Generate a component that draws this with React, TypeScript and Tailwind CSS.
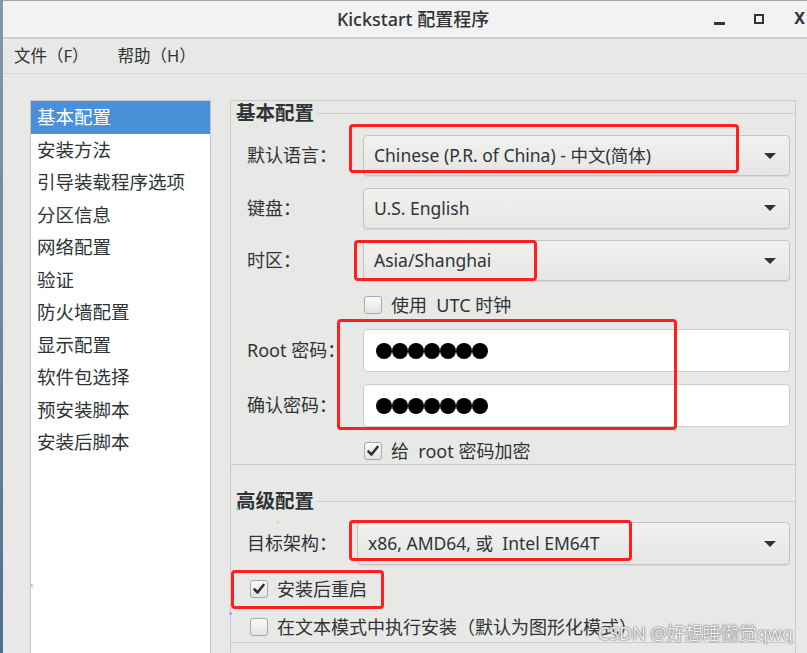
import React from "react";

const FONT = '"Noto Sans", "Noto Sans CJK SC", sans-serif';

function Arrow() {
  return (
    <div className="w-0 h-0 border-l-[6px] border-r-[6px] border-t-[6px] border-l-transparent border-r-transparent border-t-[#2e3436]" />
  );
}

function Combo({ text, className }: { text: string; className?: string }) {
  return (
    <div
      className={
        "flex items-center justify-between pl-[10px] pr-[13px] rounded-[4px] border border-[#c4c4c4] bg-gradient-to-b from-[#f1f1f0] to-[#e6e6e5] shadow-[0_1px_0_#d8d8d8] text-[17.5px] text-[#2e3436] " +
        (className || "")
      }
    >
      <span>{text}</span>
      <Arrow />
    </div>
  );
}

function PwInput() {
  return (
    <div className="h-[43px] flex items-center pl-[12px] rounded-[4px] border border-[#cdcdcd] bg-white">
      {[0, 1, 2, 3, 4, 5, 6].map((i) => (
        <div key={i} className="w-[16px] h-[16px] rounded-full bg-black" />
      ))}
    </div>
  );
}

function Check({ checked }: { checked?: boolean }) {
  return (
    <div className="w-[18px] h-[18px] shrink-0 rounded-[3px] border border-[#a9a9a9] bg-gradient-to-b from-[#fafafa] to-[#e4e4e4] flex items-center justify-center">
      {checked && (
        <svg width="14" height="14" viewBox="0 0 14 14">
          <path d="M2.5 7.5 L5.5 10.5 L11.5 3" fill="none" stroke="#2e3436" strokeWidth="2.6" strokeLinecap="round" strokeLinejoin="round" />
        </svg>
      )}
    </div>
  );
}

function Legend({ text }: { text: string }) {
  return (
    <div className="flex items-center h-[20px] pl-[5px]">
      <span className="text-[19.5px] font-bold text-[#2e3436] leading-none">{text}</span>
      <div className="flex-1 h-px bg-[#cdcdcd] ml-[3px] mt-[1px]" />
    </div>
  );
}

function RedBox({ l, t, w, h }: { l: number; t: number; w: number; h: number }) {
  return (
    <div
      className="absolute border-[3px] border-[#ff1f1f] rounded-[4px]"
      style={{ left: l, top: t, width: w, height: h }}
    />
  );
}

const items = [
  "基本配置",
  "安装方法",
  "引导装载程序选项",
  "分区信息",
  "网络配置",
  "验证",
  "防火墙配置",
  "显示配置",
  "软件包选择",
  "预安装脚本",
  "安装后脚本",
];

export default function App() {
  return (
    <div
      className="relative w-[807px] h-[653px] overflow-hidden flex bg-[#e8e8e7] text-[#2e3436]"
      style={{ fontFamily: FONT }}
    >
      <div className="w-[3px] bg-gradient-to-b from-[#8596a8] via-[#6f87a0] to-[#4d6f93]" />
      <div className="flex-1 flex flex-col">
        {/* title bar */}
        <div className="h-[37px] shrink-0 flex items-center bg-[#f2f2f2] border-t border-[#a3a3a3]">
          <div className="flex-1" />
          <div className="ml-[16px] text-[18px] font-medium text-[#2e3436]">Kickstart 配置程序</div>
          <div className="flex-1 flex items-center justify-end">
            <div className="w-[11px] h-[3px] bg-[#333] mt-[8px] mr-[29px]" />
            <div className="w-[10px] h-[10px] border-[2px] border-[#333] mr-[30px]" />
            <div className="text-[16px] font-bold text-[#333] leading-none mr-[2px] mb-[2px]">X</div>
          </div>
        </div>
        {/* menu bar */}
        <div className="h-[37px] shrink-0 flex items-center bg-[#e8e8e7] border-t-2 border-[#cfcfce] border-b border-b-[#d6d6d5] pl-[11px] text-[16.5px] text-[#2e3436]">
          <span>文件（F）</span>
          <span className="ml-[29px]">帮助（H）</span>
        </div>
        {/* content */}
        <div className="flex-1 flex pt-[26px] pl-[27px] pr-[11px]">
          <div className="w-[181px] shrink-0 bg-white border border-[#c3c3c3] border-b-0">
            {items.map((t, i) => (
              <div
                key={t}
                className={
                  "h-[32.5px] flex items-center pl-[6px] text-[18.5px] " +
                  (i === 0 ? "bg-[#4a90d9] text-white" : "text-[#2e3436]")
                }
              >
                {t}
              </div>
            ))}
          </div>
          <div className="ml-[19px] flex-1 border-l border-r border-t border-[#cbcbcb] flex flex-col">
            {/* frame 1 */}
            <div className="mt-[2px]">
              <Legend text="基本配置" />
            </div>
            <div className="border-b border-[#cdcdcd] pl-[16px] pr-[5px] pt-[12px] pb-[4px] flex flex-col text-[18px]">
              <div className="flex items-center h-[41px]">
                <div className="w-[116px]">默认语言：</div>
                <Combo text="Chinese (P.R. of China) - 中文(简体)" className="flex-1 h-[41px]" />
              </div>
              <div className="flex items-center h-[41px] mt-[11.5px]">
                <div className="w-[116px]">键盘：</div>
                <Combo text="U.S. English" className="flex-1 h-[41px]" />
              </div>
              <div className="flex items-center h-[41px] mt-[11.5px]">
                <div className="w-[116px]">时区：</div>
                <Combo text="Asia/Shanghai" className="flex-1 h-[41px]" />
              </div>
              <div className="flex items-center h-[48px] pl-[117px]">
                <Check />
                <span className="ml-[9px]">使用&nbsp; UTC 时钟</span>
              </div>
              <div className="flex items-center">
                <div className="w-[116px]">Root 密码：</div>
                <div className="flex-1"><PwInput /></div>
              </div>
              <div className="flex items-center mt-[12px]">
                <div className="w-[116px]">确认密码：</div>
                <div className="flex-1"><PwInput /></div>
              </div>
              <div className="flex items-center h-[18px] mt-[15px] pl-[117px] leading-[18px]">
                <Check checked />
                <span className="ml-[9px]">给&nbsp; root 密码加密</span>
              </div>
            </div>
            {/* frame 2 */}
            <div className="mt-[26px]">
              <Legend text="高级配置" />
            </div>
            <div className="border-b border-[#cdcdcd] pl-[16px] pr-[5px] pt-[11px] pb-[6px] flex flex-col text-[18px]">
              <div className="flex items-center">
                <div className="w-[110px]">目标架构：</div>
                <Combo text="x86, AMD64, 或  Intel EM64T" className="flex-1 h-[43px] whitespace-pre" />
              </div>
              <div className="flex items-center h-[18px] mt-[15px] pl-[3px] leading-[18px]">
                <Check checked />
                <span className="ml-[9px]">安装后重启</span>
              </div>
              <div className="flex items-center h-[18px] mt-[20px] pl-[3px] leading-[18px]">
                <Check />
                <span className="ml-[9px]">在文本模式中执行安装（默认为图形化模式）</span>
              </div>
            </div>
          </div>
        </div>
      </div>

      {/* annotations */}
      <RedBox l={349} t={124} w={390} h={49} />
      <RedBox l={354} t={240} w={183} h={41} />
      <RedBox l={337} t={319} w={340} h={111} />
      <RedBox l={349} t={520} w={283} h={41} />
      <RedBox l={231} t={570} w={153} h={39} />

      {/* tiny artifacts */}
      <div className="absolute left-[30px] top-[584px] w-[3px] h-[3px] rounded-full bg-[#7de8a8]" />
      <div className="absolute left-[236px] top-[507px] w-[3px] h-[3px] rounded-full bg-[#8fd9a8]" />
      <div className="absolute left-[276px] top-[521px] w-[3px] h-[3px] rounded-full bg-[#b7f0a0]" />
      <div className="absolute left-[229px] top-[612px] w-[3px] h-[3px] rounded-full bg-[#a9a0f0]" />

      {/* watermark */}
      <div className="absolute right-[14px] top-[621px] text-[18px] text-white/90 [text-shadow:0_0_1px_#555,0_0_2px_#777] leading-[24px]">
        CSDN @好想睡懒觉qwq
      </div>
    </div>
  );
}
